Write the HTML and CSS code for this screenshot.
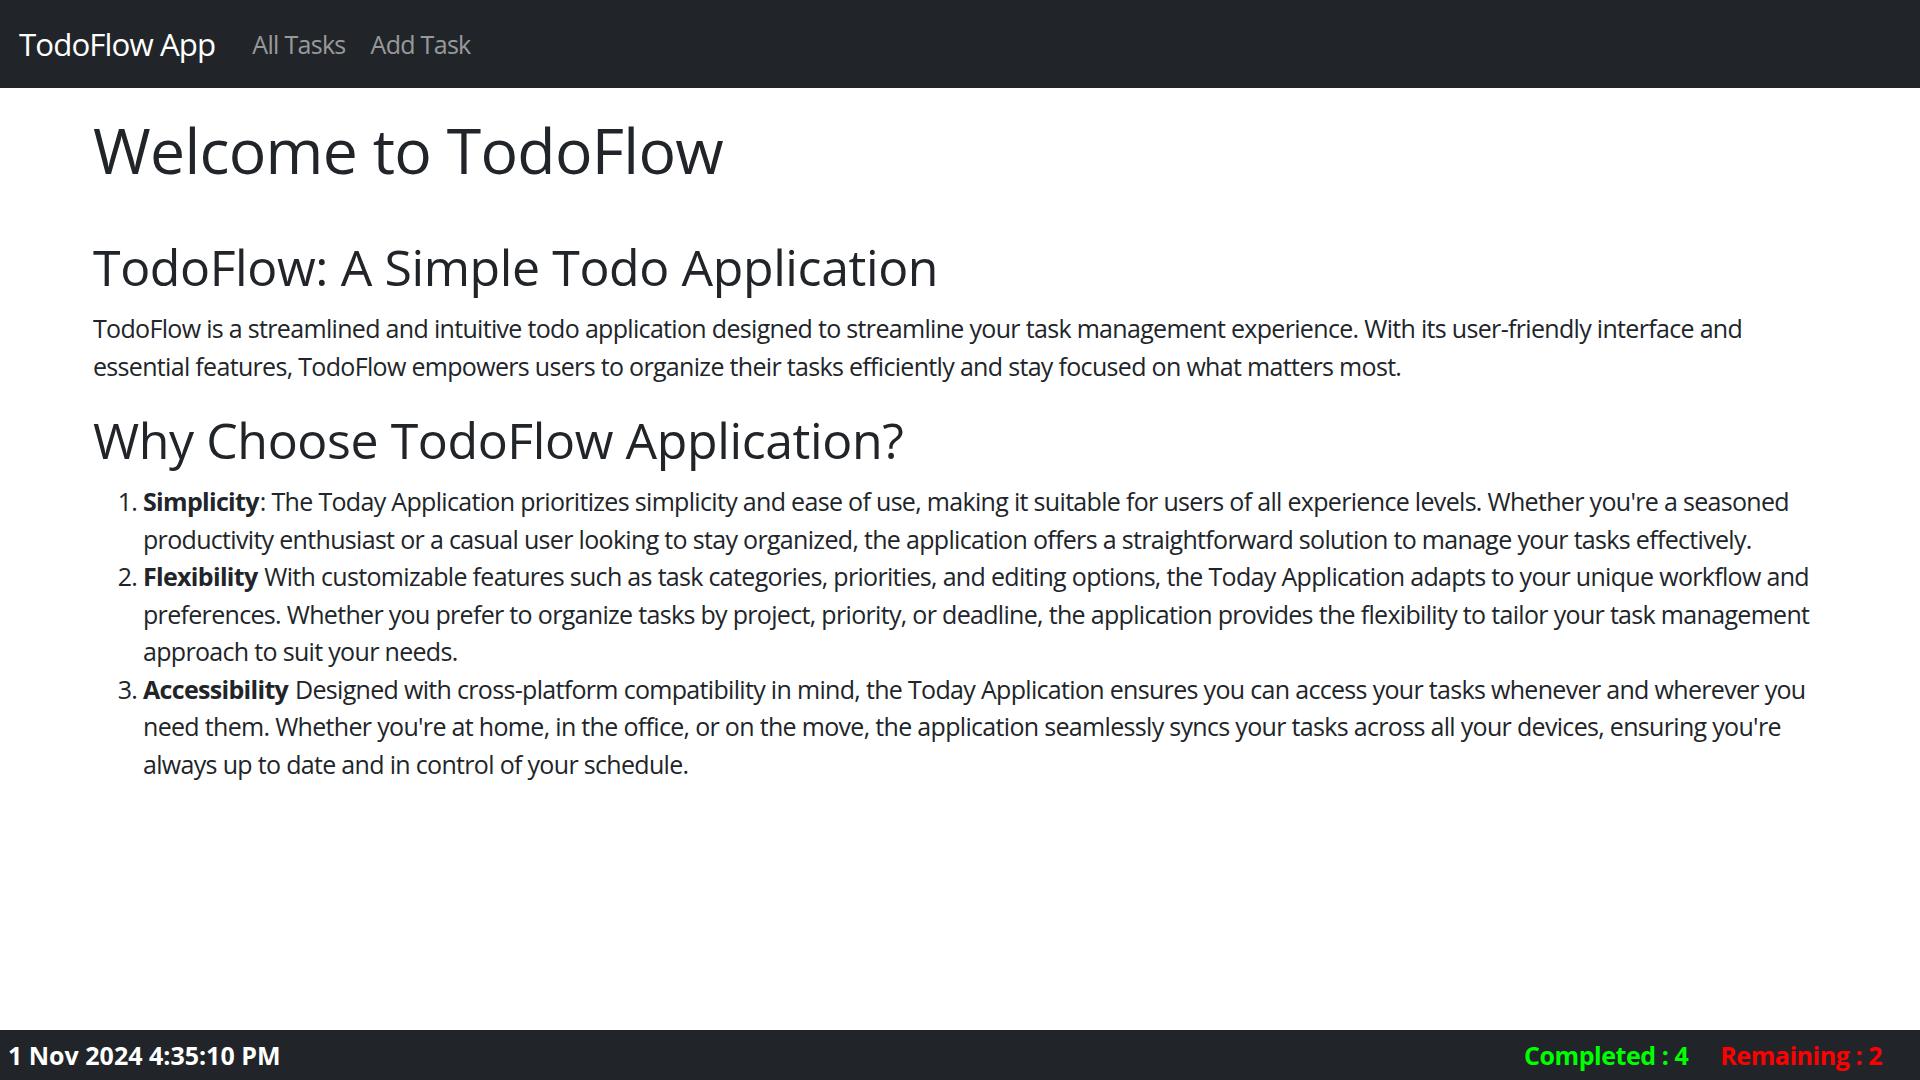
FILE: index.html
```html
<!DOCTYPE html>
<html lang="en">
<head>
<meta charset="utf-8">
<title>TodoFlow App</title>
<link rel="stylesheet" href="styles.css">
</head>
<body>
<nav class="navbar">
  <a class="brand" href="#">TodoFlow App</a>
  <ul class="nav-links">
    <li><a class="nav-link" href="#">All Tasks</a></li>
    <li><a class="nav-link" href="#">Add Task</a></li>
  </ul>
</nav>
<main class="content">
  <h1 class="title">Welcome to TodoFlow</h1>
  <h2 class="section-title">TodoFlow: A Simple Todo Application</h2>
  <p class="intro">TodoFlow is a streamlined and intuitive todo application designed to streamline your task management experience. With its user-friendly interface and essential features, TodoFlow empowers users to organize their tasks efficiently and stay focused on what matters most.</p>
  <h2 class="section-title">Why Choose TodoFlow Application?</h2>
  <ol class="reasons">
    <li><strong class="term">Simplicity</strong>: The Today Application prioritizes simplicity and ease of use, making it suitable for users of all experience levels. Whether you're a seasoned productivity enthusiast or a casual user looking to stay organized, the application offers a straightforward solution to manage your tasks effectively.</li>
    <li><strong class="term">Flexibility</strong> With customizable features such as task categories, priorities, and editing options, the Today Application adapts to your unique workflow and preferences. Whether you prefer to organize tasks by project, priority, or deadline, the application provides the flexibility to tailor your task management approach to suit your needs.</li>
    <li><strong class="term">Accessibility</strong> Designed with cross-platform compatibility in mind, the Today Application ensures you can access your tasks whenever and wherever you need them. Whether you're at home, in the office, or on the move, the application seamlessly syncs your tasks across all your devices, ensuring you're always up to date and in control of your schedule.</li>
  </ol>
</main>
<footer class="footer">
  <span class="datetime">1 Nov 2024 4:35:10 PM</span>
  <div class="stats">
    <span class="completed">Completed : 4</span>
    <span class="remaining">Remaining : 2</span>
  </div>
</footer>
</body>
</html>
```
FILE: styles.css
```css
* { box-sizing: border-box; }
html, body { margin: 0; padding: 0; }
body {
  font-family: "Open Sans", "Noto Sans", sans-serif;
  font-size: 25px;
  line-height: 37.5px;
  letter-spacing: -0.68px;
  color: #212529;
  background: #fff;
  min-height: 100vh;
  display: flex;
  flex-direction: column;
}
.navbar {
  height: 88px;
  background: #212529;
  display: flex;
  align-items: center;
  padding-left: 19px;
}
.brand {
  color: #fff;
  text-decoration: none;
  font-size: 31.25px;
  line-height: 47px;
  letter-spacing: -0.9px;
  margin-right: 37px;
  padding-top: 1px;
}
.nav-links {
  list-style: none;
  margin: 0;
  padding: 2px 0 0;
  display: flex;
  gap: 25px;
}
.nav-link {
  color: rgba(255,255,255,0.55);
  text-decoration: none;
  font-size: 25px;
  letter-spacing: -0.7px;
}
.content {
  flex: 1;
  padding: 24px 93px 0;
}
.title {
  font-size: 62.5px;
  line-height: 75px;
  font-weight: 500;
  letter-spacing: -0.7px;
  margin: 0 0 50px;
}
.section-title {
  font-size: 50px;
  line-height: 60px;
  font-weight: 500;
  letter-spacing: -0.4px;
  margin: 0 0 13px;
}
.intro {
  margin: 0 0 25px;
}
.reasons {
  margin: 0;
  padding-left: 50px;
}
.term {
  margin-right: 1px;
}
.footer {
  height: 50px;
  background: #212529;
  display: flex;
  align-items: center;
  justify-content: space-between;
  padding: 0 38px 0 8px;
  font-weight: 700;
  font-size: 25px;
  line-height: 34px;
  letter-spacing: 0;
}
.datetime { color: #fff; }
.stats { display: flex; gap: 32px; letter-spacing: -0.45px; }
.completed { color: #00ff00; }
.remaining { color: #ff0000; }
```
